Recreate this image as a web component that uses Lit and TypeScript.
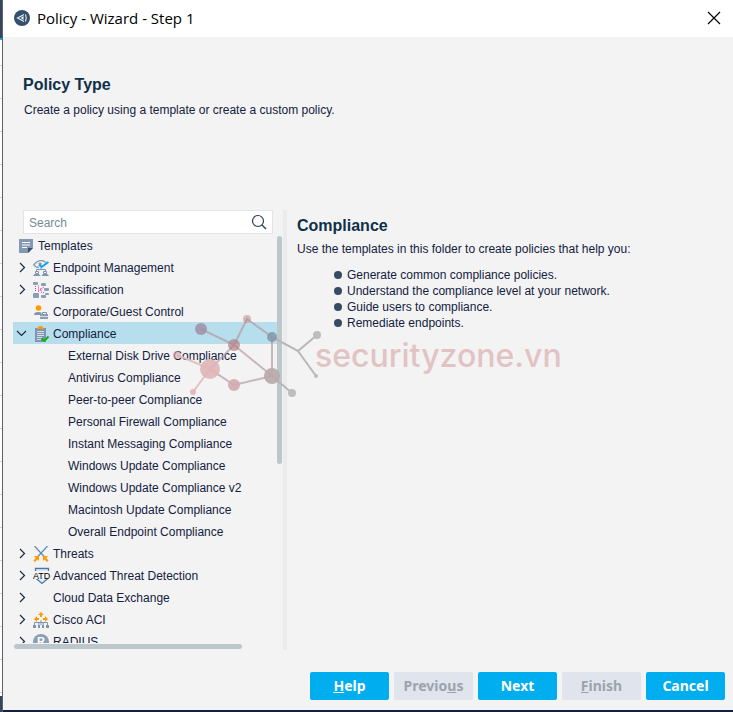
import { LitElement, html, css, svg, nothing, TemplateResult } from "lit";
import { customElement, state } from "lit/decorators.js";

type Node = { label: string; icon?: TemplateResult; children?: string[]; leaf?: boolean };

const icon = (body: TemplateResult) =>
  html`<svg class="icon" viewBox="0 0 16 16" width="16" height="16" aria-hidden="true">${body}</svg>`;

const icons = {
  templates: icon(svg`<path d="M1 1H15V10L10 15H1Z" fill="#8399b3"/><path d="M10 15V10H15Z" fill="#34506a"/>
    <path d="M4 4.500H12M4 7H12M4 9.500H9" stroke="#fff"/>`),
  endpoint: icon(svg`<path d="M0.500 5Q7-2.500 13 2.500M0.500 5Q3 7.500 6 7.500" fill="none" stroke="#8a9eb5" stroke-width="1.400"/>
    <path d="M5 3.500Q7 1.500 9 3.500L8 5.500Z" fill="#8a9eb5"/><path d="M6 4.500L8.500 7L15.500 2" fill="none" stroke="#0aa3ea" stroke-width="2"/>
    <path d="M8 8V10M3.500 12V9.500H12.500V12" fill="none" stroke="#8095b0"/>
    <path d="M2.500 11.500H5.500V13.500H2.500ZM10.500 11.500H13.500V13.500H10.500ZM0.500 15.500L1.500 14.500H6L7 15.500ZM9 15.500L10 14.500H14.500L15.500 15.500Z" fill="none" stroke="#8095b0"/>`),
  classification: icon(svg`<g fill="#8a9eb5"><rect width="5" height="3" rx="1"/><rect x="8" y="1" width="5" height="3" rx="1"/>
    <rect x="11" y="6" width="5" height="3" rx="1"/><rect y="11" width="6" height="5" rx="1"/><rect x="12" y="11" width="4" height="2" rx="1"/><rect x="8" y="13" width="5" height="3" rx="1"/></g>
    <path d="M2.500 4V10M5.500 3.500V10M5.500 9L11 5M8 6V10L12 11" fill="none" stroke="#e2359a" stroke-dasharray="1 1"/>`),
  corporate: icon(svg`<circle cx="5.500" cy="4" r="2.800" fill="#ff9a00"/><path d="M1 11Q1 8 5 8Q8 8 9 9L7 11Z" fill="#8095b0"/>
    <path d="M9.500 10V8.500H13.500V10" fill="none" stroke="#8095b0"/><path d="M7 10H15V12H7ZM7 12.700H15V15H7Z" fill="#8a9eb5"/>`),
  compliance: icon(svg`<path d="M2 2H13V16H2Z" fill="#8095b0"/><path d="M4.500 3Q4.500 0 7.500 0Q10.500 0 10.500 3Z" fill="#ff9a00"/>
    <path d="M4 5.500H11M4 7.500H11M4 9.500H11M4 11.500H9M4 13.500H8" stroke="#d5dfe8"/>
    <path d="M8.500 12.500L11 15L15.500 10.500" fill="none" stroke="#12b012" stroke-width="2"/>`),
  threats: icon(svg`<path d="M1.500 0L11.500 11M14.500 0L4.500 11" stroke="#5d88b0" stroke-width="1.200"/>
    <path d="M1 10H6V15L4.500 13.500L2 16L0.500 14.500L2.700 12ZM15 10H10V15L11.500 13.500L14 16L15.500 14.500L13.300 12Z" fill="#ff9a00"/>`),
  atd: html`<svg class="icon" viewBox="0 0 16 16" width="16" height="16" overflow="visible" aria-hidden="true">
    <path d="M2.500 0.500H15.500V10L9 15.500L2.500 10Z" fill="#dceffa" stroke="#4f779c" stroke-width="1.300"/>
    <rect x="0" y="3" width="17" height="8" fill="#f3f3f3"/><text class="atd" x="0" y="11">ATD</text></svg>`,
  aci: icon(svg`<path d="M8 0L11 3H9V5H7V3H5ZM1 7L4 4V6H6V8H4V10ZM15 7L12 4V6H10V8H12V10Z" fill="#ff9a00"/>
    <path d="M8 8V13M1.500 14V10.500H14.500V14M5.800 10.500V14M10.200 10.500V14" fill="none" stroke="#8095b0"/>
    <path d="M0 13H3V16H0ZM5 13H7V16H5ZM9 13H11V16H9ZM13 13H16V16H13Z" fill="#8095b0"/>`),
  radius: html`<svg class="icon" viewBox="0 0 16 16" width="16" height="16" aria-hidden="true">
    <circle cx="8" cy="8" r="8" fill="#8a9eb5"/><text class="rad" x="8" y="11" text-anchor="middle">R</text></svg>`,
};

const nodes: Node[] = [
  { label: "Endpoint Management", icon: icons.endpoint },
  { label: "Classification", icon: icons.classification },
  { label: "Corporate/Guest Control", icon: icons.corporate, leaf: true },
  {
    label: "Compliance",
    icon: icons.compliance,
    children: [
      "External Disk Drive Compliance",
      "Antivirus Compliance",
      "Peer-to-peer Compliance",
      "Personal Firewall Compliance",
      "Instant Messaging Compliance",
      "Windows Update Compliance",
      "Windows Update Compliance v2",
      "Macintosh Update Compliance",
      "Overall Endpoint Compliance",
    ],
  },
  { label: "Threats", icon: icons.threats },
  { label: "Advanced Threat Detection", icon: icons.atd },
  { label: "Cloud Data Exchange" },
  { label: "Cisco ACI", icon: icons.aci },
  { label: "RADIUS", icon: icons.radius },
];

@customElement("app-root")
export class AppRoot extends LitElement {
  @state() private open = true;
  @state() private selected = "Compliance";

  static styles = css`
    * { box-sizing: border-box; }
    :host {
      display: flex;
      height: 100vh;
      overflow: hidden;
      position: relative;
      font: 12px/16px "Liberation Sans", Arial, sans-serif;
      color: #14213f;
      background: #f3f3f3;
    }
    button, input { font: inherit; color: inherit; border: 0; margin: 0; padding: 0; background: none; }
    .behind {
      flex: none;
      width: 3px;
      display: flex;
      flex-direction: column;
      border-right: 1px solid #5d6266;
      background: repeating-linear-gradient(#fff 0 32px, #c3d6dc 32px 33px);
    }
    .behind-top { height: 40px; background: #34465c; border-bottom: 2px solid #16a9e8; }
    .behind-foot { height: 16px; margin-top: auto; background: #34465c; }
    .dialog { flex: 1; min-width: 0; display: flex; flex-direction: column; border-bottom: 2px solid #14213f; }
    .titlebar {
      flex: none;
      height: 37px;
      padding: 0 12px 2px 11px;
      display: flex;
      align-items: center;
      gap: 7px;
      background: #fff;
      color: #000;
      font: 15px/20px "Open Sans", "Noto Sans", sans-serif;
    }
    .close { margin-left: auto; width: 14px; height: 14px; display: flex; }
    .intro { flex: none; height: 173px; padding: 38px 20px 0; }
    h1, h2, p, ul { margin: 0; padding: 0; }
    h1, h2 { font-size: 16px; line-height: 20px; font-weight: bold; color: #0f3049; }
    .intro p { padding: 7px 0 0 1px; }
    .main { flex: 1; min-height: 0; display: flex; }
    .side { flex: none; width: 280px; display: flex; flex-direction: column; }
    .search {
      flex: none;
      height: 24px;
      margin: 0 10px 0 20px;
      padding: 0 5px;
      display: flex;
      align-items: center;
      background: #fff;
      border: 1px solid #e2e4e5;
    }
    .search input { flex: 1; min-width: 0; height: 22px; padding-top: 2px; outline: 0; }
    .search input::placeholder { color: #748d95; opacity: 1; }
    .scroll { flex: 1; min-height: 0; display: flex; padding: 0 1px 0 10px; }
    .tree { flex: 1; min-width: 0; overflow: hidden; list-style: none; }
    .tree ul { list-style: none; }
    .row {
      width: 100%;
      height: 22px;
      display: flex;
      align-items: center;
      padding: 2px 0 0 3px;
      text-align: left;
      white-space: nowrap;
    }
    .row.selected { background: #b6deec; }
    .row.child { padding-left: 55px; }
    .row.root { gap: 4px; padding-left: 5px; }
    .chev, .noicon { flex: none; width: 13px; height: 12px; margin-right: 4px; }
    .noicon { width: 16px; }
    .row .icon { flex: none; margin-right: 4px; }
    .row.root .icon { margin-right: 0; }
    .atd { font: 9px "Liberation Sans", sans-serif; fill: #000; }
    .rad { font: bold 11px "Liberation Sans", sans-serif; fill: #fff; }
    .vbar { flex: none; width: 5px; height: 228px; margin-top: 2px; border-radius: 3px; background: #bcc7cb; }
    .hbar { flex: none; width: 228px; height: 5px; margin: 1px 0 1px 11px; border-radius: 3px; background: #bcc7cb; }
    .divider { flex: none; width: 4px; background: #eaebeb; }
    .detail { flex: 1; min-width: 0; padding: 6px 20px 0 10px; }
    .detail p { padding-top: 5px; }
    .detail ul { list-style: none; padding: 10px 0 0 37px; }
    .detail li { display: flex; align-items: center; gap: 5px; }
    .detail li::before { content: ""; width: 8px; height: 8px; border-radius: 4px; background: #364c64; }
    .footer { flex: none; height: 60px; padding: 22px 8px 0; display: flex; justify-content: flex-end; gap: 5px; }
    .footer button {
      width: 79px;
      height: 28px;
      border-radius: 2px;
      background: #00aeef;
      color: #fff;
      font: bold 14px/20px "Noto Sans", "Open Sans", sans-serif;
    }
    .footer button:disabled { background: #e0e5ed; color: #9ba3ad; }
    .mark { position: absolute; left: 160px; top: 300px; pointer-events: none; }
    .mark text { font: 500 32px Inter, "DejaVu Sans", sans-serif; fill: #e2c3c4; }
  `;

  private chevron(open: boolean) {
    return html`<svg class="chev" viewBox="0 0 13 12" aria-hidden="true">
      <path d=${open ? "M1 3L5.500 7.500L10 3" : "M4 1L8.500 5.500L4 10"} fill="none" stroke="#1d2b3c" stroke-width="1.200" /></svg>`;
  }

  private pick(n: Node) {
    if (n.children) this.open = this.selected === n.label ? !this.open : true;
    this.selected = n.label;
  }

  private node(n: Node) {
    const open = !!n.children && this.open;
    return html`<li>
      <button class="row ${this.selected === n.label ? "selected" : ""}" @click=${() => this.pick(n)}>
        ${n.leaf ? html`<span class="chev"></span>` : this.chevron(open)}
        ${n.icon ?? html`<span class="noicon"></span>`}<span>${n.label}</span>
      </button>
      ${open
        ? html`<ul>${n.children!.map((c) => html`<li>
            <button class="row child ${this.selected === c ? "selected" : ""}" @click=${() => (this.selected = c)}>${c}</button>
          </li>`)}</ul>`
        : nothing}
    </li>`;
  }

  render() {
    return html`
      <div class="behind"><div class="behind-top"></div><div class="behind-foot"></div></div>
      <div class="dialog">
        <header class="titlebar">
          <svg width="16" height="16" viewBox="0 0 16 16" aria-hidden="true">
            <circle cx="8" cy="8" r="8" fill="#34506a" />
            <path d="M10 4.500L3.500 8L10 11.500M11.500 4.500Q13 8 11.500 11.500M9 7V9L7.500 8Z" fill="none" stroke="#e8f0f5" stroke-width="1.100" />
          </svg>
          <span>Policy - Wizard - Step 1</span>
          <button class="close" aria-label="Close">
            <svg width="14" height="14" viewBox="0 0 14 14"><path d="M1 1L13 13M13 1L1 13" stroke="#000" stroke-width="1.200" /></svg>
          </button>
        </header>
        <section class="intro">
          <h1>Policy Type</h1>
          <p>Create a policy using a template or create a custom policy.</p>
        </section>
        <main class="main">
          <div class="side">
            <label class="search">
              <input type="text" placeholder="Search" aria-label="Search" />
              <svg width="16" height="16" viewBox="0 0 16 16" aria-hidden="true">
                <circle cx="7" cy="7" r="5.500" fill="none" stroke="#2b4258" stroke-width="1.200" />
                <path d="M11 11L15 15" stroke="#2b4258" stroke-width="1.400" />
              </svg>
            </label>
            <div class="scroll">
              <ul class="tree">
                <li><button class="row root">${icons.templates}<span>Templates</span></button></li>
                ${nodes.map((n) => this.node(n))}
              </ul>
              <div class="vbar"></div>
            </div>
            <div class="hbar"></div>
          </div>
          <div class="divider"></div>
          <section class="detail">
            <h2>Compliance</h2>
            <p>Use the templates in this folder to create policies that help you:</p>
            <ul>
              <li>Generate common compliance policies.</li>
              <li>Understand the compliance level at your network.</li>
              <li>Guide users to compliance.</li>
              <li>Remediate endpoints.</li>
            </ul>
          </section>
        </main>
        <footer class="footer">
          <button><u>H</u>elp</button>
          <button disabled>Previo<u>u</u>s</button>
          <button>Next</button>
          <button disabled><u>F</u>inish</button>
          <button>Cancel</button>
        </footer>
      </div>
      <svg class="mark" width="410" height="110" viewBox="0 0 410 110">
        <g fill="none" stroke-width="2">
          <path d="M41 29L74 45L87 19L112 37V76L74 45L50 69L74 85L112 76" stroke="#b39ba3" stroke-opacity=".7" />
          <path d="M17 55L50 69L33 92" stroke="#e0bcbe" stroke-opacity=".9" />
          <path d="M112 37L138 51L157 35M138 51L156 76M112 76L132 93" stroke="#b8b8b8" />
        </g>
        <g fill="#b08088" fill-opacity=".5">
          <circle cx="41" cy="29" r="6" fill="#9d8ba5" fill-opacity=".8" />
          <circle cx="74" cy="45" r="6" fill-opacity=".7" />
          <circle cx="87" cy="19" r="4" />
          <circle cx="112" cy="37" r="5" fill="#7f94a4" fill-opacity=".8" />
          <circle cx="112" cy="76" r="8" fill="#b8a9ab" fill-opacity=".9" />
          <circle cx="50" cy="69" r="10" fill="#dfb5b8" fill-opacity=".9" />
          <circle cx="74" cy="85" r="6" fill="#d1aaae" fill-opacity=".9" />
          <circle cx="17" cy="55" r="4" fill="#e0a8ac" fill-opacity=".6" />
          <circle cx="33" cy="92" r="3" fill="#dfb5b8" fill-opacity=".9" />
          <circle cx="157" cy="35" r="4" fill="#bdbdbd" fill-opacity="1" />
          <circle cx="156" cy="76" r="2" fill="#bdbdbd" fill-opacity="1" />
          <circle cx="132" cy="93" r="4" fill="#bdbdbd" fill-opacity="1" />
        </g>
        <text x="155" y="67">securityzone.vn</text>
      </svg>
    `;
  }
}
